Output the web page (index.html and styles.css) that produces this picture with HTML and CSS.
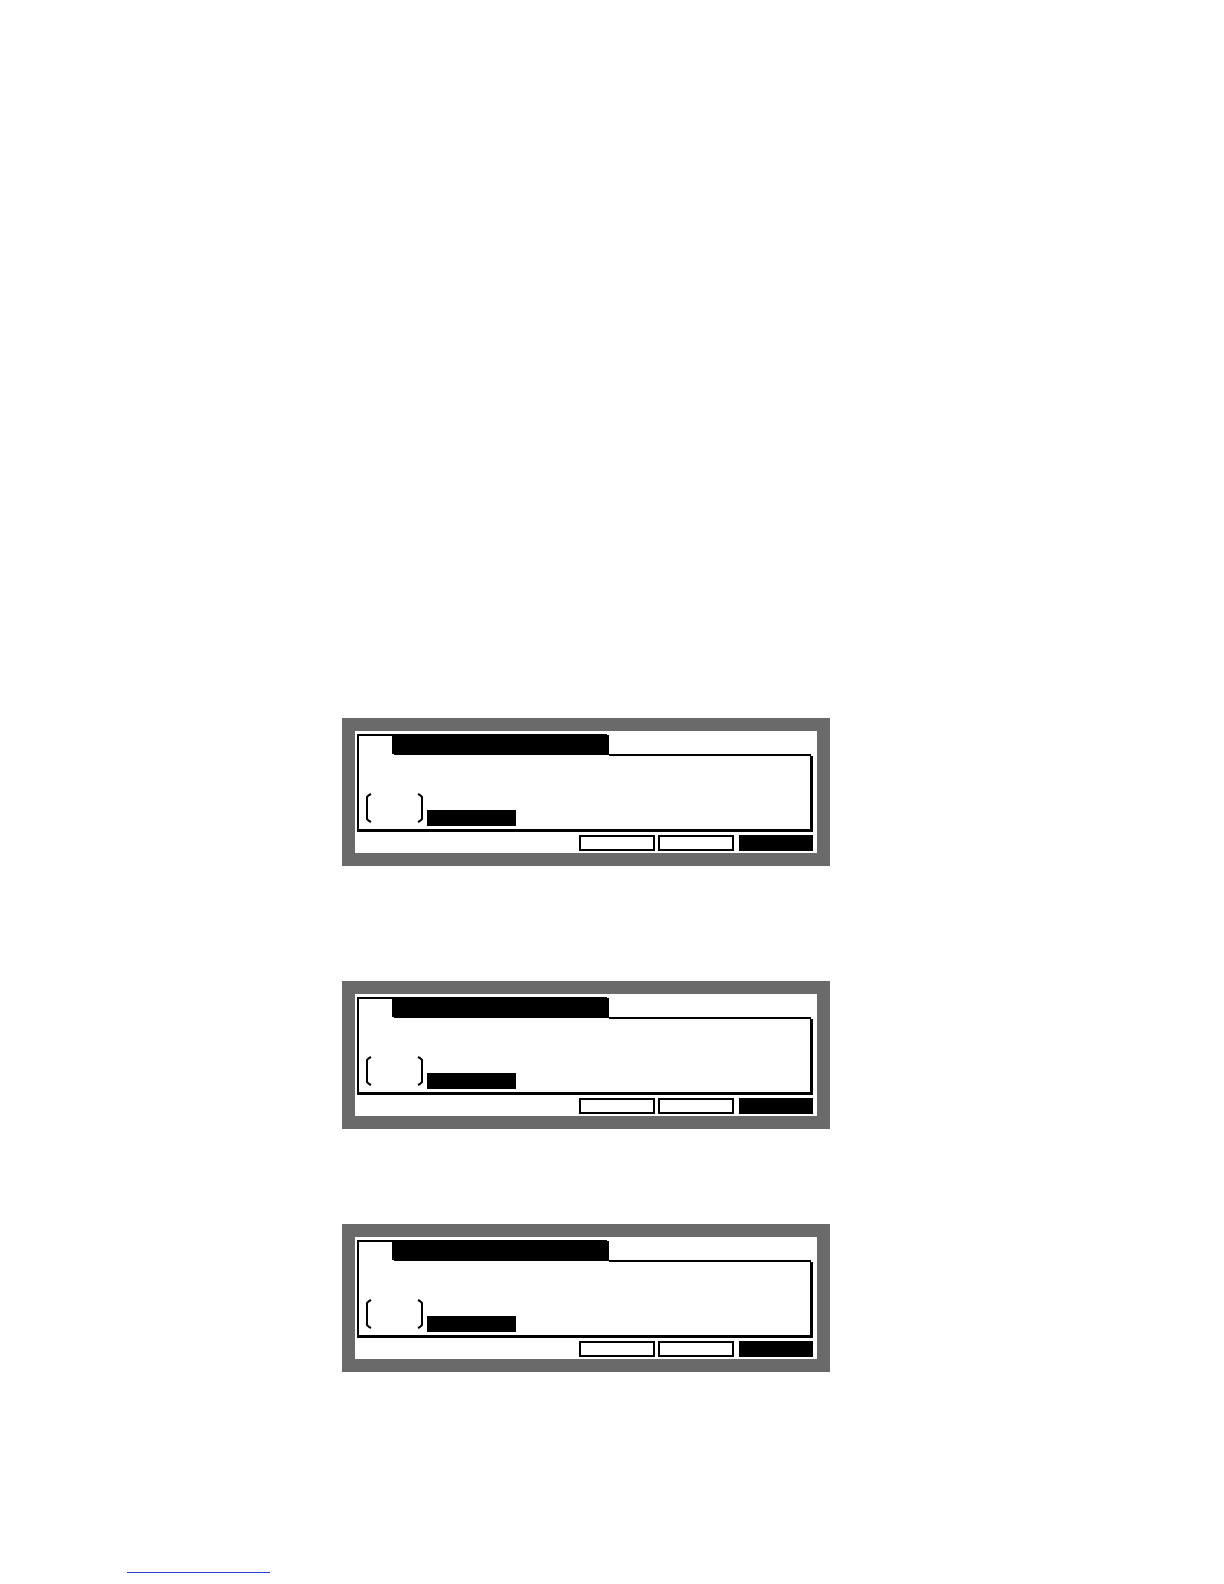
FILE: index.html
```html
<!DOCTYPE html>
<html lang="en">
<head>
<meta charset="utf-8">
<title>LCD screens</title>
<link rel="stylesheet" href="styles.css">
</head>
<body>
<div class="page">
  <div class="panels">
    <div class="panel panel-1">
      <div class="frame">
        <div class="frame-head">
          <div class="head-cap"></div>
          <div class="tab"></div>
          <div class="head-rest"></div>
        </div>
        <div class="frame-body">
          <svg class="brackets" width="61" height="30" viewBox="0 0 61 30" aria-hidden="true">
            <polyline points="7,1 5,2 3,4 3,26 5,28 7,29" fill="none" stroke="#000" stroke-width="2"/>
            <polyline points="54,1 56,2 58,4 58,26 56,28 54,29" fill="none" stroke="#000" stroke-width="2"/>
          </svg>
          <div class="value-bar"></div>
        </div>
      </div>
      <div class="buttons">
        <div class="btn btn-outline"></div>
        <div class="btn btn-outline"></div>
        <div class="btn btn-solid"></div>
      </div>
    </div>

    <div class="panel panel-2">
      <div class="frame">
        <div class="frame-head">
          <div class="head-cap"></div>
          <div class="tab"></div>
          <div class="head-rest"></div>
        </div>
        <div class="frame-body">
          <svg class="brackets" width="61" height="30" viewBox="0 0 61 30" aria-hidden="true">
            <polyline points="7,1 5,2 3,4 3,26 5,28 7,29" fill="none" stroke="#000" stroke-width="2"/>
            <polyline points="54,1 56,2 58,4 58,26 56,28 54,29" fill="none" stroke="#000" stroke-width="2"/>
          </svg>
          <div class="value-bar"></div>
        </div>
      </div>
      <div class="buttons">
        <div class="btn btn-outline"></div>
        <div class="btn btn-outline"></div>
        <div class="btn btn-solid"></div>
      </div>
    </div>

    <div class="panel panel-3">
      <div class="frame">
        <div class="frame-head">
          <div class="head-cap"></div>
          <div class="tab"></div>
          <div class="head-rest"></div>
        </div>
        <div class="frame-body">
          <svg class="brackets" width="61" height="30" viewBox="0 0 61 30" aria-hidden="true">
            <polyline points="7,1 5,2 3,4 3,26 5,28 7,29" fill="none" stroke="#000" stroke-width="2"/>
            <polyline points="54,1 56,2 58,4 58,26 56,28 54,29" fill="none" stroke="#000" stroke-width="2"/>
          </svg>
          <div class="value-bar"></div>
        </div>
      </div>
      <div class="buttons">
        <div class="btn btn-outline"></div>
        <div class="btn btn-outline"></div>
        <div class="btn btn-solid"></div>
      </div>
    </div>
  </div>
  <div class="footnote-rule"></div>
</div>
</body>
</html>
```

FILE: styles.css
```css
* {
  box-sizing: border-box;
}

html, body {
  margin: 0;
  padding: 0;
  background: #ffffff;
  font-family: "Liberation Sans", Arial, sans-serif;
}

.page {
  width: 1224px;
  height: 1584px;
  padding-top: 718px;
  overflow: hidden;
}

.panels {
  margin-left: 342px;
  display: flex;
  flex-direction: column;
}

.panel {
  width: 488px;
  height: 148px;
  border: 13px solid #6a6a6a;
  background: #ffffff;
  display: flex;
  flex-direction: column;
}

.panel-2 {
  margin-top: 115px;
}

.panel-3 {
  margin-top: 95px;
}

.frame {
  margin: 3px 0 0 2px;
  width: 456px;
}

.frame-head {
  display: flex;
  height: 22px;
}

.head-cap {
  width: 35px;
  border-top: 2px solid #000;
  border-left: 2px solid #000;
}

.tab {
  width: 215px;
  height: 20px;
  background: #000;
  box-shadow: 2px 1px 0 #000;
}

.head-rest {
  flex: 1;
  border-bottom: 2px solid #000;
  margin-left: 2px;
  margin-right: 2px;
}

.frame-body {
  height: 76px;
  border-left: 2px solid #000;
  border-right: 3px solid #000;
  border-bottom: 3px solid #000;
  display: flex;
  align-items: flex-end;
  padding: 0 0 3px 5px;
}

.brackets {
  display: block;
  margin-bottom: 3px;
}

.value-bar {
  width: 89px;
  height: 16px;
  margin-left: 2px;
  background: #000;
}

.buttons {
  display: flex;
  justify-content: flex-end;
  gap: 3px;
  margin-top: 3px;
  padding-right: 4px;
}

.btn {
  width: 76px;
  height: 16px;
}

.btn-outline {
  border: 2px solid #000;
  background: #fff;
}

.btn-solid {
  width: 74px;
  margin-left: 2px;
  background: #000;
}

.footnote-rule {
  margin: 200px 0 0 127px;
  width: 143px;
  height: 1px;
  background: #2b3fd0;
}
```
